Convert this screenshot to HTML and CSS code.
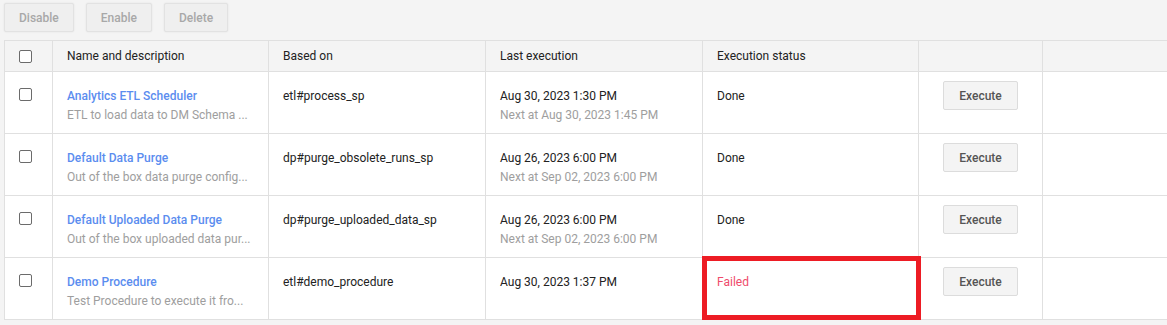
FILE: index.html
```html
<!DOCTYPE html>
<html lang="en">
<head>
    <meta charset="UTF-8">
    <meta name="viewport" content="width=device-width, initial-scale=1.0">
    <title>Procedures</title>
    <link rel="stylesheet" href="styles.css">
</head>
<body>
    <div class="toolbar">
        <button class="tool-btn">Disable</button>
        <button class="tool-btn">Enable</button>
        <button class="tool-btn">Delete</button>
    </div>
    <div class="table-wrap">
        <table class="grid">
            <colgroup>
                <col class="col-check">
                <col class="col-name">
                <col class="col-based">
                <col class="col-last">
                <col class="col-status">
                <col class="col-action">
                <col class="col-rest">
            </colgroup>
            <thead>
                <tr>
                    <th class="check-cell"><span class="checkbox"></span></th>
                    <th>Name and description</th>
                    <th>Based on</th>
                    <th>Last execution</th>
                    <th>Execution status</th>
                    <th></th>
                    <th></th>
                </tr>
            </thead>
            <tbody>
                <tr>
                    <td class="check-cell"><span class="checkbox"></span></td>
                    <td>
                        <a class="name" href="#">Analytics ETL Scheduler</a>
                        <div class="sub">ETL to load data to DM Schema ...</div>
                    </td>
                    <td>etl#process_sp</td>
                    <td>
                        <div>Aug 30, 2023 1:30 PM</div>
                        <div class="sub">Next at Aug 30, 2023 1:45 PM</div>
                    </td>
                    <td>Done</td>
                    <td class="action-cell"><button class="exec-btn">Execute</button></td>
                    <td></td>
                </tr>
                <tr>
                    <td class="check-cell"><span class="checkbox"></span></td>
                    <td>
                        <a class="name" href="#">Default Data Purge</a>
                        <div class="sub">Out of the box data purge config...</div>
                    </td>
                    <td>dp#purge_obsolete_runs_sp</td>
                    <td>
                        <div>Aug 26, 2023 6:00 PM</div>
                        <div class="sub">Next at Sep 02, 2023 6:00 PM</div>
                    </td>
                    <td>Done</td>
                    <td class="action-cell"><button class="exec-btn">Execute</button></td>
                    <td></td>
                </tr>
                <tr>
                    <td class="check-cell"><span class="checkbox"></span></td>
                    <td>
                        <a class="name" href="#">Default Uploaded Data Purge</a>
                        <div class="sub">Out of the box uploaded data pur...</div>
                    </td>
                    <td>dp#purge_uploaded_data_sp</td>
                    <td>
                        <div>Aug 26, 2023 6:00 PM</div>
                        <div class="sub">Next at Sep 02, 2023 6:00 PM</div>
                    </td>
                    <td>Done</td>
                    <td class="action-cell"><button class="exec-btn">Execute</button></td>
                    <td></td>
                </tr>
                <tr>
                    <td class="check-cell"><span class="checkbox"></span></td>
                    <td>
                        <a class="name" href="#">Demo Procedure</a>
                        <div class="sub">Test Procedure to execute it fro...</div>
                    </td>
                    <td>etl#demo_procedure</td>
                    <td>
                        <div>Aug 30, 2023 1:37 PM</div>
                    </td>
                    <td class="status-cell"><span class="failed">Failed</span><span class="highlight"></span></td>
                    <td class="action-cell"><button class="exec-btn">Execute</button></td>
                    <td></td>
                </tr>
            </tbody>
        </table>
    </div>
</body>
</html>
```

FILE: styles.css
```css
body {
    font-family: Roboto, "Liberation Sans", Arial, sans-serif;
    font-size: 12px;
    margin: 0;
    padding: 0;
    background-color: #f4f4f4;
    color: #222;
    overflow: hidden;
}

/* Top toolbar */
.toolbar {
    display: flex;
    gap: 12px;
    padding: 3px 0 0 4px;
    height: 40px;
    box-sizing: border-box;
}
.tool-btn {
    font-family: inherit;
    font-size: 12px;
    font-weight: 500;
    height: 29px;
    padding: 0 14px;
    color: #a8a8a8;
    background-color: #efefef;
    border: 1px solid #e2e2e2;
    border-radius: 2px;
    box-shadow: 0 0 2px rgba(0, 0, 0, 0.08);
}

/* Table */
.table-wrap {
    padding-left: 4px;
    overflow: hidden;
}
.grid {
    border-collapse: collapse;
    table-layout: fixed;
    width: 1300px;
    background: #fff;
}
.col-check { width: 48px; }
.col-name { width: 216px; }
.col-based { width: 217px; }
.col-last { width: 217px; }
.col-status { width: 216px; }
.col-action { width: 124px; }
.col-rest { width: 262px; }

.grid th,
.grid td {
    border: 1px solid #e0e0e0;
    text-align: left;
    padding: 0 14px;
    line-height: 19px;
}
.grid th {
    background-color: #f4f4f4;
    font-weight: 400;
    height: 30px;
    color: #222;
}
.grid td {
    height: 62px;
    vertical-align: top;
    padding-top: 15px;
    box-sizing: border-box;
}
.grid td.check-cell,
.grid th.check-cell {
    padding: 0 0 0 14px;
}
.grid td.check-cell {
    padding-top: 16px;
}
.checkbox {
    display: inline-block;
    width: 11px;
    height: 11px;
    border: 1px solid #6b6b6b;
    border-radius: 2px;
    background: #fff;
    vertical-align: middle;
}
.grid td.check-cell .checkbox {
    vertical-align: top;
}

.name {
    display: block;
    color: #5b8def;
    font-weight: 500;
    text-decoration: none;
}
.sub {
    color: #9e9e9e;
    white-space: nowrap;
}

.grid td.action-cell {
    text-align: center;
    padding: 9px 0 0 0;
}
.exec-btn {
    font-family: inherit;
    font-size: 12px;
    font-weight: 500;
    width: 75px;
    height: 29px;
    color: #555;
    background-color: #f4f4f4;
    border: 1px solid #dcdcdc;
    border-radius: 2px;
}

/* Failed status with annotation frame */
.status-cell {
    position: relative;
}
.failed {
    color: #ef4b6b;
}
.highlight {
    position: absolute;
    left: -1px;
    top: -2px;
    right: -3px;
    bottom: -1px;
    border: 5px solid #ed1c24;
}
```
